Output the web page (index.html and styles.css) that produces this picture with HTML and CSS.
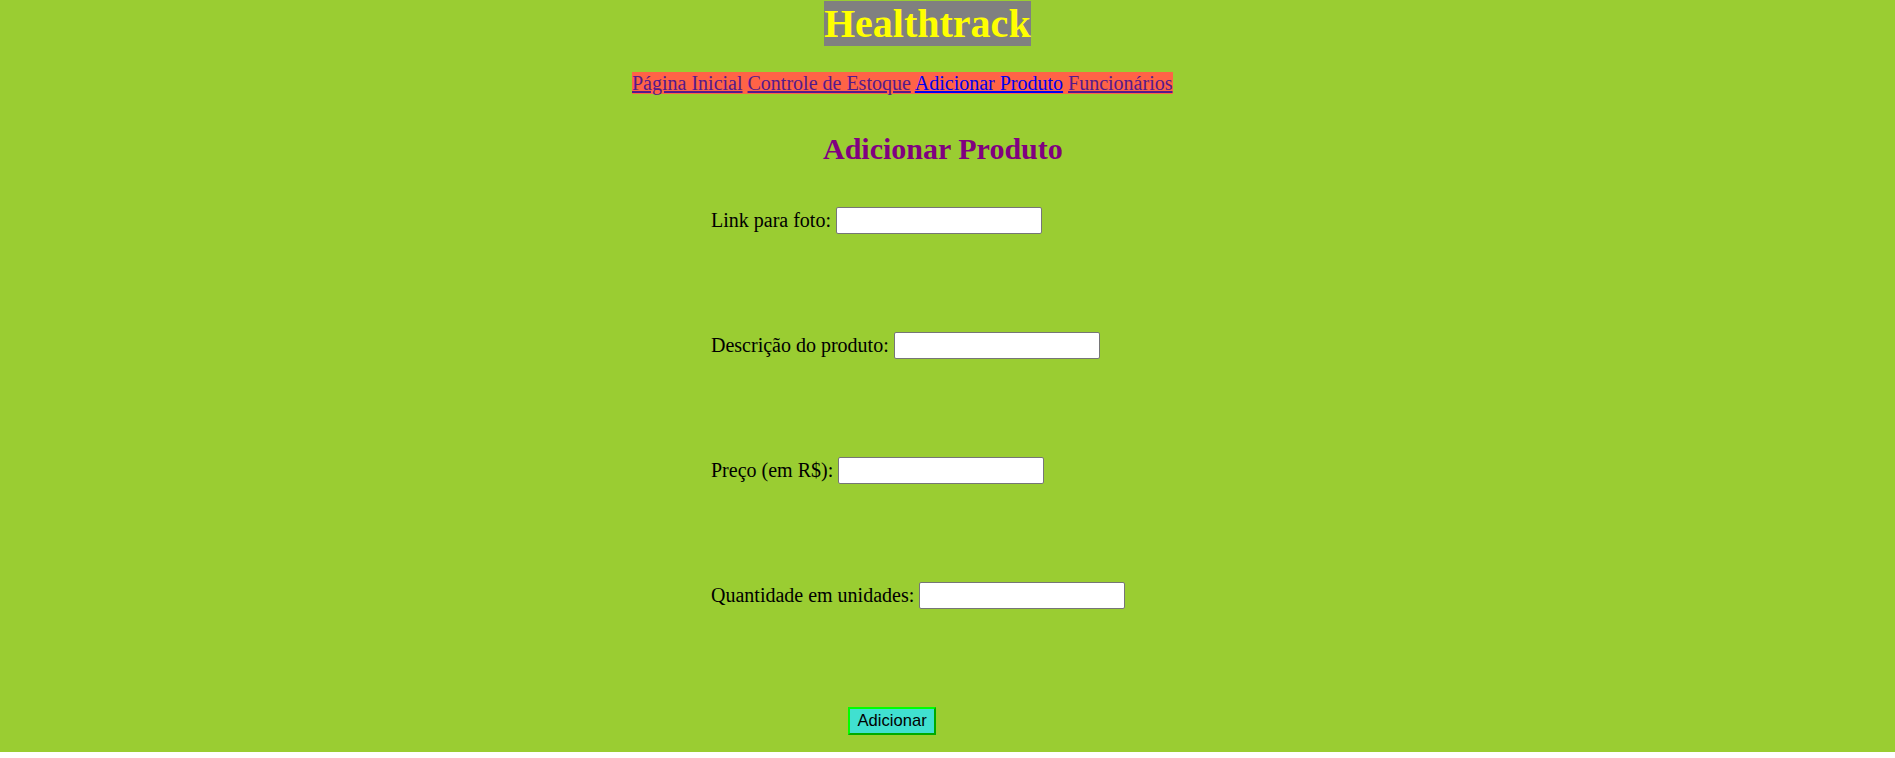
FILE: index.html
```html
<!DOCTYPE html>
<html lang="pt-BR">
<head>
<meta charset="utf-8">
<title>Healthtrack - Adicionar Produto</title>
<link rel="stylesheet" href="styles.css">
</head>
<body>
<div class="page">
  <h1 class="brand"><span class="brand-text">Healthtrack</span></h1>
  <nav class="nav"><span class="nav-bar"><a class="visited" href="#">Página Inicial</a> <a class="visited" href="#">Controle de Estoque</a> <a class="current" href="#">Adicionar Produto</a> <a class="visited" href="#">Funcionários</a></span></nav>
  <h2 class="title">Adicionar Produto</h2>
  <form class="form">
    <div class="row"><label class="label" for="foto">Link para foto:</label><input class="field" id="foto" type="text"></div>
    <div class="row"><label class="label" for="desc">Descrição do produto:</label><input class="field" id="desc" type="text"></div>
    <div class="row"><label class="label" for="preco">Preço (em R$):</label><input class="field" id="preco" type="text"></div>
    <div class="row"><label class="label" for="qtd">Quantidade em unidades:</label><input class="field" id="qtd" type="text"></div>
    <div class="actions"><button class="btn" type="submit">Adicionar</button></div>
  </form>
</div>
</body>
</html>
```
FILE: styles.css
```css
html, body {
  margin: 0;
  padding: 0;
  background: #ffffff;
}

.page {
  background: #9acd32;
  height: 752px;
  padding-left: 632px;
  box-sizing: border-box;
  font-family: "Liberation Serif", "Times New Roman", serif;
  color: #000000;
  overflow: hidden;
}

.brand {
  margin: 0 0 0 192px;
  font-size: 40px;
  font-weight: bold;
  line-height: 47px;
}

.brand-text {
  background: #808080;
  color: #ffff00;
}

.nav {
  margin-top: 24px;
  font-size: 20px;
  line-height: 24px;
}

.nav-bar {
  background: #ff6347;
}

.nav a {
  text-decoration: underline;
}

.nav a.visited {
  color: #551a8b;
}

.nav a.current {
  color: #0000ee;
}

.title {
  margin: 36px 0 0 191px;
  font-size: 30px;
  font-weight: bold;
  line-height: 35px;
  color: #800080;
}

.form {
  margin: 41px 0 0 79px;
  display: flex;
  flex-direction: column;
  gap: 98px;
}

.row {
  display: flex;
  align-items: center;
  height: 27px;
  font-size: 20px;
}

.label {
  margin-right: 5px;
}

.field {
  box-sizing: border-box;
  width: 206px;
  height: 27px;
  margin: 0;
  padding: 1px 2px;
  border: 1px solid #767676;
  border-radius: 2px;
  background: #ffffff;
  font-size: 16.6px;
}

.actions {
  padding-left: 137px;
}

.btn {
  box-sizing: border-box;
  height: 28px;
  margin: 0;
  padding: 0 7.5px;
  border: 2px outset #00ff00;
  background: #40e0d0;
  color: #000000;
  font-family: "Liberation Sans", Arial, sans-serif;
  font-size: 16.6px;
}
```
